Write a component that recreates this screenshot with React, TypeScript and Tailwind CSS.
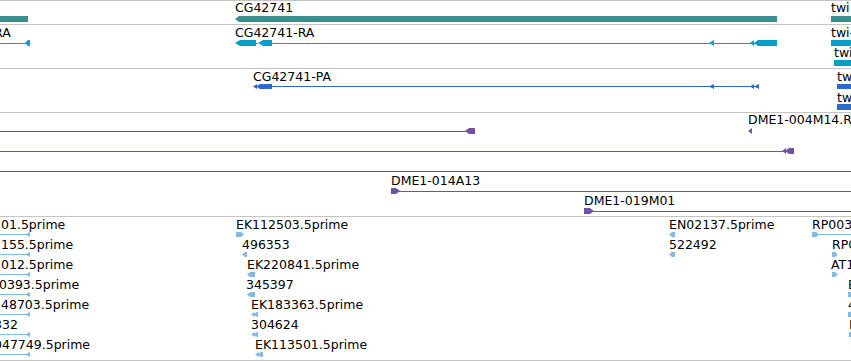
import React from "react";

type Label = { x: number; y: number; t: string };

const larrow = (x0: number, x1: number, yt: number, yb: number, tip = 4) =>
  `${x0},${(yt + yb) / 2} ${x0 + tip},${yt} ${x1},${yt} ${x1},${yb} ${x0 + tip},${yb}`;
const rarrow = (x0: number, x1: number, yt: number, yb: number, tip = 4) =>
  `${x0},${yt} ${x1 - tip},${yt} ${x1},${(yt + yb) / 2} ${x1 - tip},${yb} ${x0},${yb}`;
const tri = (x0: number, x1: number, yt: number, yb: number) =>
  `${x0},${(yt + yb) / 2} ${x1},${yt} ${x1},${yb}`;

type Shape =
  | { k: "p"; pts: string }
  | { k: "r"; x0: number; x1: number; y0: number; y1: number };

const P = (pts: string): Shape => ({ k: "p", pts });
const R = (x0: number, x1: number, y0: number, y1: number): Shape => ({ k: "r", x0, x1, y0, y1 });
const L = (x0: number, x1: number, y: number): Shape => ({ k: "r", x0, x1, y0: y, y1: y + 1 });

type TrackDef = {
  top: number;
  h: string;
  hpx: number;
  color: string;
  shapes: Shape[];
  labels: Label[];
};

const tracks: TrackDef[] = [
  {
    top: 1,
    h: "h-[24px]",
    hpx: 23,
    color: "#3f8e8f",
    shapes: [R(0, 28, 16, 22), P(larrow(235, 777, 16, 22, 4)), R(831, 851, 16, 22)],
    labels: [
      { x: 235, y: 2, t: "CG42741" },
      { x: 831, y: 2, t: "twi" },
    ],
  },
  {
    top: 25,
    h: "h-[44px]",
    hpx: 43,
    color: "#06a0c2",
    shapes: [
      L(0, 27, 43),
      P(larrow(25, 30, 40, 46, 3)),
      P(larrow(235, 256, 40, 46, 5)),
      L(256, 258, 43),
      P(larrow(258, 272, 40, 46, 5)),
      L(272, 758, 43),
      P(tri(709, 714, 40, 46)),
      P(tri(750, 754, 40, 46)),
      P(tri(754, 758, 40, 46)),
      R(758, 777, 40, 46),
      R(831, 851, 40, 46),
      R(834, 851, 60, 66),
    ],
    labels: [
      { x: -6, y: 27, t: "RA" },
      { x: 235, y: 27, t: "CG42741-RA" },
      { x: 831, y: 27, t: "twi-RA" },
      { x: 834, y: 47, t: "twi-RB" },
    ],
  },
  {
    top: 69,
    h: "h-[44px]",
    hpx: 43,
    color: "#2f67cc",
    shapes: [
      P(tri(253, 257, 84, 89)),
      P(larrow(256, 272, 84, 89, 4)),
      L(272, 758, 86),
      P(tri(709, 714, 84, 89)),
      P(tri(750, 754, 84, 89)),
      P(tri(754, 759, 84, 89)),
      R(837, 851, 84, 89),
      R(837, 851, 104, 110),
    ],
    labels: [
      { x: 253, y: 71, t: "CG42741-PA" },
      { x: 837, y: 71, t: "twi-PA" },
      { x: 837, y: 92, t: "twi-PB" },
    ],
  },
  {
    top: 113,
    h: "h-[104px]",
    hpx: 103,
    color: "#6f52a6",
    shapes: [
      L(0, 466, 131),
      P(larrow(465, 475, 128, 134, 4)),
      P(tri(748, 752, 128, 134)),
      L(0, 783, 151),
      P(tri(782, 786, 148, 154)),
      P(larrow(785, 794, 148, 154, 4)),
      L(0, 851, 171),
      P(rarrow(391, 400, 188, 194, 4)),
      L(399, 851, 191),
      P(rarrow(584, 594, 208, 214, 4)),
      L(593, 851, 211),
    ],
    labels: [
      { x: 748, y: 114, t: "DME1-004M14.R" },
      { x: 391, y: 175, t: "DME1-014A13" },
      { x: 584, y: 195, t: "DME1-019M01" },
    ],
  },
  {
    top: 217,
    h: "h-[144px]",
    hpx: 143,
    color: "#84b9e1",
    shapes: [
      ...[0, 1, 2, 3, 4, 5, 6].flatMap((k) => [
        L(0, 27, 234 + 20 * k),
        P(tri(25, 30, 232 + 20 * k, 237 + 20 * k)),
      ]),
      P(rarrow(236, 244, 232, 237, 3)),
      P(larrow(242, 247, 252, 257, 3)),
      P(larrow(247, 255, 272, 277, 3)),
      P(larrow(247, 255, 292, 297, 3)),
      P(tri(251, 255, 312, 317)),
      P(larrow(254, 258, 312, 317, 3)),
      P(tri(251, 255, 332, 337)),
      P(larrow(254, 258, 332, 337, 3)),
      P(tri(255, 259, 352, 357)),
      P(larrow(258, 263, 352, 357, 3)),
      P(larrow(669, 675, 232, 237, 3)),
      P(larrow(669, 675, 252, 257, 3)),
      P(rarrow(812, 819, 232, 237, 3)),
      L(818, 851, 234),
      P(rarrow(832, 838, 252, 257, 3)),
      P(rarrow(832, 838, 272, 277, 3)),
      P(rarrow(848, 854, 292, 297, 3)),
      P(rarrow(848, 854, 312, 317, 3)),
      P(rarrow(849, 855, 332, 337, 3)),
    ],
    labels: [
      { x: 1, y: 219, t: "01.5prime" },
      { x: 1, y: 239, t: "155.5prime" },
      { x: 1, y: 259, t: "012.5prime" },
      { x: -1, y: 279, t: "0393.5prime" },
      { x: 1, y: 299, t: "48703.5prime" },
      { x: -6, y: 319, t: "332" },
      { x: -6, y: 339, t: "047749.5prime" },
      { x: 236, y: 219, t: "EK112503.5prime" },
      { x: 242, y: 239, t: "496353" },
      { x: 247, y: 259, t: "EK220841.5prime" },
      { x: 246, y: 279, t: "345397" },
      { x: 251, y: 299, t: "EK183363.5prime" },
      { x: 251, y: 319, t: "304624" },
      { x: 255, y: 339, t: "EK113501.5prime" },
      { x: 669, y: 219, t: "EN02137.5prime" },
      { x: 669, y: 239, t: "522492" },
      { x: 812, y: 219, t: "RP003" },
      { x: 832, y: 239, t: "RP0" },
      { x: 831, y: 259, t: "AT1" },
      { x: 848, y: 279, t: "E" },
      { x: 848, y: 299, t: "4" },
      { x: 849, y: 319, t: "E" },
    ],
  },
];

function Track({ d }: { d: TrackDef }) {
  return (
    <div className={`relative ${d.h} overflow-hidden border-b border-[#c4c4c4]`}>
      <svg
        className="absolute left-0 top-0"
        width={851}
        height={d.hpx}
        viewBox={`0 ${d.top} 851 ${d.hpx}`}
        fill={d.color}
      >
        {d.shapes.map((s, i) =>
          s.k === "p" ? (
            <polygon key={i} points={s.pts} />
          ) : (
            <rect key={i} x={s.x0} y={s.y0} width={s.x1 - s.x0} height={s.y1 - s.y0} shapeRendering="crispEdges" />
          )
        )}
      </svg>
      {d.labels.map((l, i) => (
        <div
          key={i}
          className="absolute whitespace-nowrap text-[12.5px] leading-[12px] text-black"
          style={{ left: l.x, top: l.y - d.top }}
        >
          {l.t}
        </div>
      ))}
    </div>
  );
}

export default function App() {
  return (
    <div className="h-[361px] w-[851px] overflow-hidden border-t border-[#c4c4c4] bg-white font-['DejaVu_Sans',sans-serif]">
      {tracks.map((d, i) => (
        <Track key={i} d={d} />
      ))}
    </div>
  );
}
